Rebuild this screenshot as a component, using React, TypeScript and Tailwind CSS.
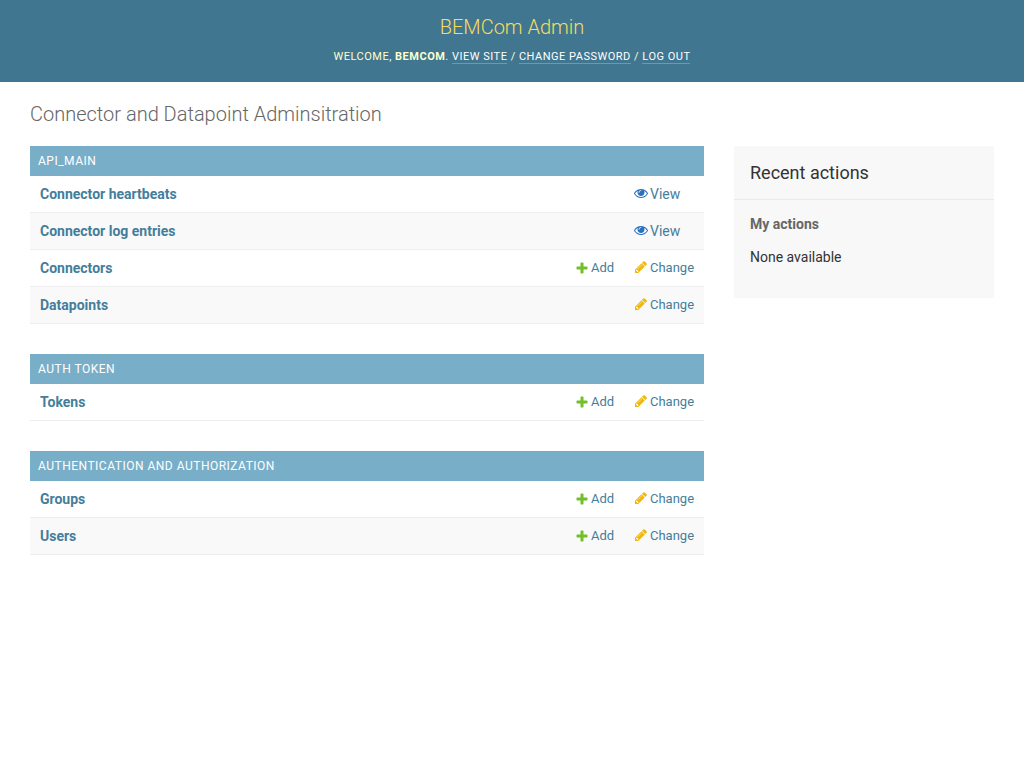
const addIcon = "M1600 796v192q0 40-28 68t-68 28h-416v416q0 40-28 68t-68 28h-192q-40 0-68-28t-28-68v-416h-416q-40 0-68-28t-28-68v-192q0-40 28-68t68-28h416v-416q0-40 28-68t68-28h192q40 0 68 28t28 68v416h416q40 0 68 28t28 68z";
const changeIcon = "M491 1536l91-91-235-235-91 91v107h128v128h107zm523-928q0-22-22-22-10 0-17 7l-542 542q-7 7-7 17 0 22 22 22 10 0 17-7l542-542q7-7 7-17zm-54-192l416 416-832 832h-416v-416zm683 96q0 53-37 90l-166 166-416-416 166-165q36-38 90-38 53 0 91 38l235 234q37 39 37 91z";
const viewIcon = "M1664 960q-152-236-381-353 61 104 61 225 0 185-131.5 316.5t-316.5 131.5-316.5-131.5-131.5-316.5q0-121 61-225-229 117-381 353 133 205 333.5 326.5t434.5 121.5 434.5-121.5 333.5-326.5zm-720-384q0-20-14-34t-34-14q-125 0-214.5 89.5t-89.5 214.5q0 20 14 34t34 14 34-14 14-34q0-86 61-147t147-61q20 0 34-14t14-34zm848 384q0 34-20 69-140 230-376.5 368.5t-499.5 138.5-499.5-139-376.5-368q-20-35-20-69t20-69q140-229 376.5-368t499.5-139 499.5 139 376.5 368q20 35 20 69z";

function Icon({ d, color, className }: { d: string; color: string; className: string }) {
  return (
    <svg viewBox="0 0 1792 1792" className={`shrink-0 ${className}`}>
      <path fill={color} d={d} />
    </svg>
  );
}

function AddLink() {
  return (
    <a className="flex items-center gap-[2px] text-[13px] text-[#447e9b]">
      <Icon d={addIcon} color="#70bf2b" className="-mt-px h-[14px] w-[14px]" />
      Add
    </a>
  );
}

function ChangeLink() {
  return (
    <a className="flex items-center gap-[2px] text-[13px] text-[#447e9b]">
      <Icon d={changeIcon} color="#efb80b" className="-mt-[2px] h-[14px] w-[14px]" />
      Change
    </a>
  );
}

function ViewLink() {
  return (
    <a className="flex items-center gap-[2px] text-[14px] text-[#447e9b]">
      <Icon d={viewIcon} color="#2b70bf" className="-mt-[2px] h-[14px] w-[14px]" />
      View
    </a>
  );
}

interface RowProps {
  name: string;
  add?: boolean;
  change?: boolean;
  view?: boolean;
  odd?: boolean;
}

function ModelRow({ name, add, change, view, odd }: RowProps) {
  return (
    <div className={`flex h-[37px] items-center border-b border-[#eeeeee] pl-[10px] ${odd ? "bg-[#f9f9f9]" : "bg-white"}`}>
      <a className="flex-1 text-[14px] font-bold text-[#447e9b]">{name}</a>
      <div className="w-[59px]">{add && <AddLink />}</div>
      <div className="w-[70px]">
        {change && <ChangeLink />}
        {view && <ViewLink />}
      </div>
    </div>
  );
}

function Module({ title, children }: { title: string; children: React.ReactNode }) {
  return (
    <div className="mb-[30px]">
      <div className="flex h-[30px] items-center bg-[#79aec8] pl-2 text-[12px] tracking-[0.5px] text-white">{title}</div>
      {children}
    </div>
  );
}

export default function App() {
  return (
    <div className="min-h-[768px] bg-white font-['Roboto',sans-serif] text-[14px] text-[#333333]">
      <div className="flex h-[82px] flex-col items-center bg-[#417690] pt-[13px]">
        <div className="text-[20px] leading-7 font-light text-[#f5dd5d]">BEMCom Admin</div>
        <div className="mt-[8px] text-[11px] leading-[16px] tracking-[0.5px] text-[#ffffcc] uppercase">
          Welcome, <strong>BEMCom</strong>.{" "}
          <a className="border-b border-[#ffffff40] text-white">View site</a> /{" "}
          <a className="border-b border-[#ffffff40] text-white">Change password</a> /{" "}
          <a className="border-b border-[#ffffff40] text-white">Log out</a>
        </div>
      </div>

      <div className="px-[30px] pt-[20px]">
        <h1 className="text-[20px] leading-6 font-light text-[#666666]">Connector and Datapoint Adminsitration</h1>
        <div className="mt-[20px] flex gap-[30px]">
          <div className="w-[674px]">
            <Module title="API_MAIN">
              <ModelRow name="Connector heartbeats" view />
              <ModelRow name="Connector log entries" view odd />
              <ModelRow name="Connectors" add change />
              <ModelRow name="Datapoints" change odd />
            </Module>
            <Module title="AUTH TOKEN">
              <ModelRow name="Tokens" add change />
            </Module>
            <Module title="AUTHENTICATION AND AUTHORIZATION">
              <ModelRow name="Groups" add change />
              <ModelRow name="Users" add change odd />
            </Module>
          </div>

          <div className="h-[152px] w-[260px] bg-[#f8f8f8]">
            <h2 className="border-b border-[#eaeaea] px-4 pt-[16px] pb-[16px] text-[18px] leading-[21px] text-[#333333]">Recent actions</h2>
            <div className="px-4 pt-[16px]">
              <h3 className="text-[14px] leading-[16px] font-bold text-[#666666]">My actions</h3>
              <p className="mt-[17px] text-[14px] leading-[16px] text-[#333333]">None available</p>
            </div>
          </div>
        </div>
      </div>
    </div>
  );
}
